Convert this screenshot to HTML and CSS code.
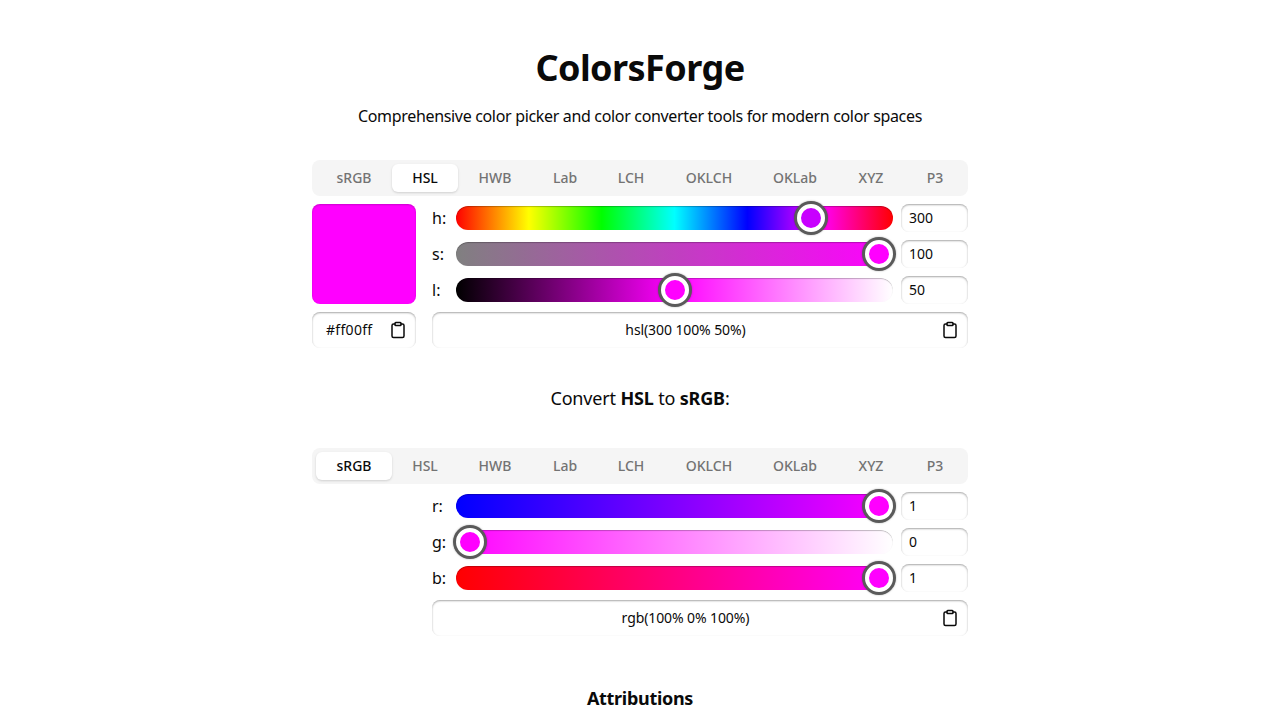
FILE: index.html
```html
<!DOCTYPE html>
<html lang="en">
<head>
    <meta charset="UTF-8">
    <meta name="viewport" content="width=device-width, initial-scale=1.0">
    <title>ColorsForge</title>
    <link rel="stylesheet" href="styles.css">
</head>
<body>
    <header class="page-header">
        <h1>ColorsForge</h1>
        <p>Comprehensive color picker and color converter tools for modern color spaces</p>
    </header>

    <main class="tools">
        <section class="picker">
            <div class="tabs">
                <button class="tab">sRGB</button>
                <button class="tab active">HSL</button>
                <button class="tab">HWB</button>
                <button class="tab">Lab</button>
                <button class="tab">LCH</button>
                <button class="tab">OKLCH</button>
                <button class="tab">OKLab</button>
                <button class="tab">XYZ</button>
                <button class="tab">P3</button>
            </div>
            <div class="panel">
                <div class="swatch"></div>
                <div class="sliders">
                    <label class="slider-row">
                        <span class="slider-label">h:</span>
                        <input class="slider track-hue thumb-violet" type="range" min="0" max="360" value="300">
                        <input class="number" type="text" value="300">
                    </label>
                    <label class="slider-row">
                        <span class="slider-label">s:</span>
                        <input class="slider track-sat" type="range" min="0" max="100" value="100">
                        <input class="number" type="text" value="100">
                    </label>
                    <label class="slider-row">
                        <span class="slider-label">l:</span>
                        <input class="slider track-light" type="range" min="0" max="100" value="50">
                        <input class="number" type="text" value="50">
                    </label>
                </div>
                <div class="copy-box hex-box">
                    <span class="copy-text">#ff00ff</span>
                    <svg class="copy-icon" viewBox="0 0 24 24"><rect x="8" y="2" width="8" height="4" rx="1"/><path d="M16 4h2a2 2 0 0 1 2 2v14a2 2 0 0 1-2 2H6a2 2 0 0 1-2-2V6a2 2 0 0 1 2-2h2"/></svg>
                </div>
                <div class="copy-box css-box">
                    <span class="copy-text">hsl(300 100% 50%)</span>
                    <svg class="copy-icon" viewBox="0 0 24 24"><rect x="8" y="2" width="8" height="4" rx="1"/><path d="M16 4h2a2 2 0 0 1 2 2v14a2 2 0 0 1-2 2H6a2 2 0 0 1-2-2V6a2 2 0 0 1 2-2h2"/></svg>
                </div>
            </div>
        </section>

        <p class="convert-title">Convert <strong>HSL</strong> to <strong>sRGB</strong>:</p>

        <section class="picker">
            <div class="tabs">
                <button class="tab active">sRGB</button>
                <button class="tab">HSL</button>
                <button class="tab">HWB</button>
                <button class="tab">Lab</button>
                <button class="tab">LCH</button>
                <button class="tab">OKLCH</button>
                <button class="tab">OKLab</button>
                <button class="tab">XYZ</button>
                <button class="tab">P3</button>
            </div>
            <div class="panel">
                <div class="sliders">
                    <label class="slider-row">
                        <span class="slider-label">r:</span>
                        <input class="slider track-red" type="range" min="0" max="1" value="1">
                        <input class="number" type="text" value="1">
                    </label>
                    <label class="slider-row">
                        <span class="slider-label">g:</span>
                        <input class="slider track-green" type="range" min="0" max="1" value="0">
                        <input class="number" type="text" value="0">
                    </label>
                    <label class="slider-row">
                        <span class="slider-label">b:</span>
                        <input class="slider track-blue" type="range" min="0" max="1" value="1">
                        <input class="number" type="text" value="1">
                    </label>
                </div>
                <div class="copy-box css-box">
                    <span class="copy-text">rgb(100% 0% 100%)</span>
                    <svg class="copy-icon" viewBox="0 0 24 24"><rect x="8" y="2" width="8" height="4" rx="1"/><path d="M16 4h2a2 2 0 0 1 2 2v14a2 2 0 0 1-2 2H6a2 2 0 0 1-2-2V6a2 2 0 0 1 2-2h2"/></svg>
                </div>
            </div>
        </section>

        <h2 class="attributions">Attributions</h2>
    </main>
</body>
</html>
```

FILE: styles.css
```css
* {
    box-sizing: border-box;
}

html, body {
    height: 100%;
}

body {
    margin: 0;
    overflow: hidden;
    background-color: #fff;
    color: #0a0a0a;
    font-family: "Noto Sans", sans-serif;
}

.page-header {
    padding-top: 44px;
    text-align: center;
}

.page-header h1 {
    margin: 0;
    font-size: 36px;
    line-height: 48px;
    font-weight: 700;
    letter-spacing: -0.55px;
}

.page-header p {
    margin: 12px 0 0;
    font-size: 16px;
    line-height: 24px;
    letter-spacing: -0.33px;
}

.tools {
    width: 656px;
    margin: 32px auto 0;
}

.tabs {
    display: grid;
    grid-template-columns: 76px 66px 74px 66px 66px 90px 82px 70px 58px;
    height: 36px;
    padding: 4px;
    border-radius: 8px;
    background-color: #f5f5f5;
}

.tab {
    border: none;
    border-radius: 6px;
    padding: 0 0 2px;
    background: none;
    color: #737373;
    font-family: inherit;
    font-size: 14px;
    font-weight: 500;
}

.tab.active {
    background-color: #fff;
    color: #0a0a0a;
    box-shadow: 0 1px 3px rgba(0, 0, 0, 0.1), 0 1px 2px rgba(0, 0, 0, 0.06);
}

.panel {
    display: grid;
    grid-template-columns: 104px 536px;
    column-gap: 16px;
    row-gap: 8px;
    margin-top: 8px;
}

.swatch {
    height: 100px;
    border-radius: 8px;
    background-color: #f0f;
    box-shadow: inset 0 1px 2px rgba(0, 0, 0, 0.2);
}

.sliders {
    grid-column: 2;
    display: flex;
    flex-direction: column;
    gap: 8px;
}

.slider-row {
    display: flex;
    align-items: center;
    gap: 8px;
    height: 28px;
}

.slider-label {
    width: 16px;
    font-size: 16px;
}

.slider {
    flex: 1;
    min-width: 0;
    height: 24px;
    margin: 0;
    border-radius: 12px;
    box-shadow: inset 0 1px 1px rgba(0, 0, 0, 0.25);
    appearance: none;
    -webkit-appearance: none;
    --thumb: #f0f;
}

.slider::-webkit-slider-thumb {
    -webkit-appearance: none;
    width: 28px;
    height: 28px;
    border: 4px solid #fff;
    border-radius: 50%;
    background-color: var(--thumb);
    box-shadow: 0 0 0 3px #5a5a5a, 0 0 2px 3px rgba(0, 0, 0, 0.3);
}

.thumb-violet {
    --thumb: #c800ff;
}

.track-hue {
    background-image: linear-gradient(to right, #f00, #ff0 16.67%, #0f0 33.33%, #0ff 50%, #00f 66.67%, #f0f 83.33%, #f00);
}

.track-sat {
    background-image: linear-gradient(to right, #808080, #f0f);
}

.track-light {
    background-image: linear-gradient(to right, #000, #f0f 50%, #fff);
}

.track-red {
    background-image: linear-gradient(to right, #00f, #f0f);
}

.track-green {
    background-image: linear-gradient(to right, #f0f, #fff);
}

.track-blue {
    background-image: linear-gradient(to right, #f00, #f0f);
}

.number {
    width: 67px;
    height: 28px;
    padding: 0 8px 2px;
    border: none;
    border-radius: 8px;
    background-color: #fff;
    color: #0a0a0a;
    font-family: inherit;
    font-size: 14px;
    box-shadow: inset 0 1px 2px rgba(0, 0, 0, 0.35);
    outline: none;
}

.copy-box {
    display: flex;
    align-items: center;
    height: 36px;
    padding: 0 9px 0 14px;
    border-radius: 8px;
    font-size: 14px;
    box-shadow: inset 0 1px 2px rgba(0, 0, 0, 0.35);
}

.hex-box {
    grid-column: 1;
}

.css-box {
    grid-column: 2;
}

.copy-text {
    flex: 1;
    padding-bottom: 2px;
}

.css-box .copy-text {
    margin-right: 16px;
    letter-spacing: -0.1px;
    text-align: center;
}

.hex-box .copy-text {
    letter-spacing: 0.3px;
}

.copy-icon {
    width: 18px;
    height: 18px;
    fill: none;
    stroke: #0a0a0a;
    stroke-width: 2;
    stroke-linecap: round;
    stroke-linejoin: round;
}

.convert-title {
    margin: 38px 0 0;
    font-size: 18px;
    line-height: 24px;
    letter-spacing: -0.17px;
    text-align: center;
}

.convert-title strong {
    font-weight: 700;
}

.tools .convert-title + .picker {
    margin-top: 38px;
}

.attributions {
    margin: 50px 0 0;
    font-size: 18px;
    line-height: 24px;
    font-weight: 700;
    letter-spacing: -0.3px;
    text-align: center;
}
```
